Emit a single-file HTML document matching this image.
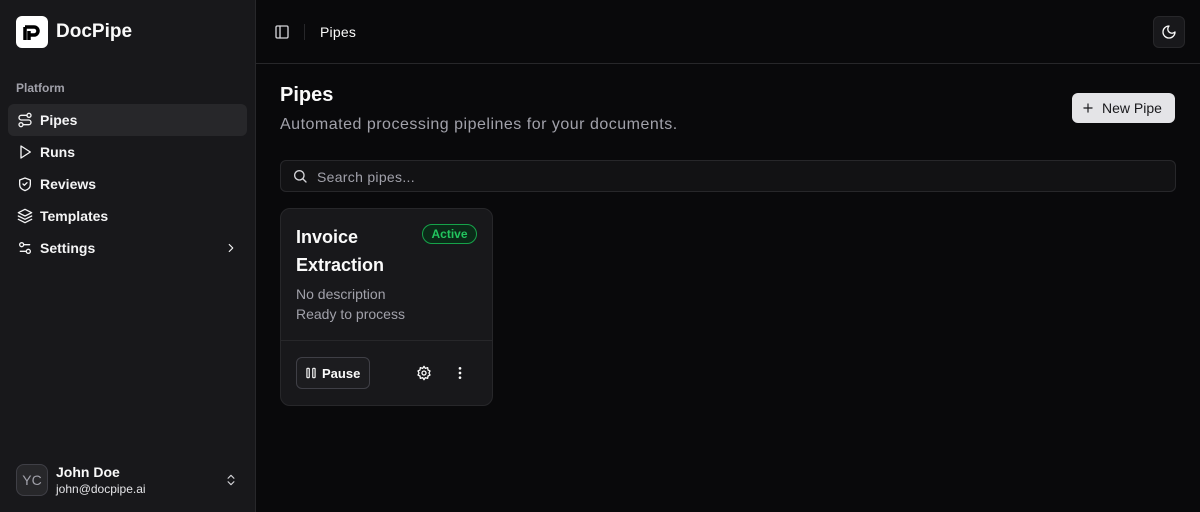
<!DOCTYPE html>
<html><head><meta charset="utf-8"><style>
*{box-sizing:border-box;margin:0;padding:0}
body{width:1200px;height:512px;background:#09090b;font-family:"Liberation Sans",sans-serif;color:#fafafa;position:relative;overflow:hidden}
.sb{position:absolute;left:0;top:0;width:256px;height:512px;background:#18181b;border-right:1px solid #27272a}
.logo{position:absolute;left:16px;top:16px;width:32px;height:32px;background:#fff;border-radius:6px}
.brand{position:absolute;left:56px;top:21px;font-size:19px;font-weight:bold}
.plat{position:absolute;left:16px;top:81px;font-size:12px;color:#a1a1aa;font-weight:bold}
.nav{position:absolute;left:8px;width:239px;height:32px;border-radius:6px;font-size:14px;font-weight:bold;display:flex;align-items:center;padding-left:32px;color:#f4f4f5}
.nav svg{position:absolute;left:9px;top:8px}
.act{background:#27272a}
svg{fill:none;stroke:currentColor;stroke-width:2;stroke-linecap:round;stroke-linejoin:round}
.hdr{position:absolute;left:256px;top:0;right:0;height:64px;border-bottom:1px solid #27272a}
</style></head><body>
<div class="sb">
<div class="logo"><svg width="32" height="32" viewBox="0 0 32 32" style="stroke:#000;stroke-width:3.5;stroke-linecap:butt"><path d="M9 11h9a4 4 0 0 1 0 8h-4M13 15v9M9 11v13"/></svg></div>
<div class="brand">DocPipe</div>
<div class="plat">Platform</div>
<div class="nav act" style="top:104px"><svg width="16" height="16" viewBox="0 0 24 24"><circle cx="6" cy="19" r="3"/><path d="M9 19h8.5a3.5 3.5 0 0 0 0-7h-11a3.5 3.5 0 0 1 0-7H15"/><circle cx="18" cy="5" r="3"/></svg>Pipes</div>
<div class="nav" style="top:136px"><svg width="16" height="16" viewBox="0 0 24 24"><path d="M6 3l14 9-14 9z"/></svg>Runs</div>
<div class="nav" style="top:168px"><svg width="16" height="16" viewBox="0 0 24 24"><path d="M20 13c0 5-3.5 7.5-8 9-4.5-1.5-8-4-8-9V6l8-3 8 3z"/><path d="M9 12l2 2 4-4"/></svg>Reviews</div>
<div class="nav" style="top:200px"><svg width="16" height="16" viewBox="0 0 24 24"><path d="M12 2 2 7l10 5 10-5z"/><path d="M2 12l10 5 10-5M2 17l10 5 10-5"/></svg>Templates</div>
<div class="nav" style="top:232px"><svg width="16" height="16" viewBox="0 0 24 24"><path d="M14 17H5M19 7h-9"/><circle cx="17" cy="17" r="3"/><circle cx="7" cy="7" r="3"/></svg>Settings<svg width="14" height="14" viewBox="0 0 24 24" style="left:216px;top:9px"><path d="M9 18l6-6-6-6"/></svg></div>
<div style="position:absolute;left:16px;top:464px;width:32px;height:32px;border-radius:8px;background:#27272a;border:1px solid #3f3f46;color:#a1a1aa;font-size:14px;display:flex;align-items:center;justify-content:center">YC</div>
<div style="position:absolute;left:56px;top:464px;font-size:14px;font-weight:bold">John Doe</div>
<div style="position:absolute;left:56px;top:482px;font-size:12px;color:#e4e4e7">john@docpipe.ai</div>
<svg width="14" height="14" viewBox="0 0 24 24" style="position:absolute;left:224px;top:473px;color:#d4d4d8"><path d="M7 15l5 5 5-5M7 9l5-5 5 5"/></svg>
</div>
<div class="hdr">
<svg width="16" height="16" viewBox="0 0 24 24" style="position:absolute;left:18px;top:24px;color:#d4d4d8"><rect x="3" y="3" width="18" height="18" rx="2"/><path d="M9 3v18"/></svg>
<div style="position:absolute;left:48px;top:24px;width:1px;height:16px;background:#27272a"></div>
<div style="position:absolute;left:64px;top:24px;font-size:14px;letter-spacing:0.2px">Pipes</div>
<div style="position:absolute;right:15px;top:16px;width:32px;height:32px;border:1px solid #27272a;border-radius:6px;background:#18181b"><svg width="16" height="16" viewBox="0 0 24 24" style="position:absolute;left:7px;top:7px"><path d="M12 3a6 6 0 0 0 9 9 9 9 0 1 1-9-9z"/></svg></div>
</div>
<div style="position:absolute;left:280px;top:84px;font-size:20px;font-weight:bold">Pipes</div>
<div style="position:absolute;left:280px;top:116px;font-size:16px;color:#a1a1aa;letter-spacing:0.5px">Automated processing pipelines for your documents.</div>
<div style="position:absolute;left:1072px;top:93px;width:103px;height:30px;background:#e4e4e7;border-radius:6px;color:#18181b;font-size:14px;display:flex;align-items:center;padding-left:30px">New Pipe<svg width="14" height="14" viewBox="0 0 24 24" style="position:absolute;left:9px;top:8px"><path d="M12 5v14M5 12h14"/></svg></div>
<div style="position:absolute;left:280px;top:160px;width:896px;height:32px;border:1px solid #27272a;border-radius:6px;background:#121214;font-size:14px;color:#a1a1aa;padding:8px 0 0 36px;letter-spacing:0.3px">Search pipes...<svg width="16" height="16" viewBox="0 0 24 24" style="position:absolute;left:11px;top:7px;color:#d4d4d8"><circle cx="11" cy="11" r="7"/><path d="M21 21l-4.3-4.3"/></svg></div>
<div style="position:absolute;left:280px;top:208px;width:213px;height:198px;border:1px solid #27272a;border-radius:10px;background:#18181b">
<div style="position:absolute;left:15px;top:14px;font-size:18px;line-height:28px;font-weight:bold;color:#fafafa">Invoice<br>Extraction</div>
<div style="position:absolute;left:141px;top:15px;height:20px;width:55px;text-align:center;border:1px solid #16a34a;border-radius:10px;color:#22c55e;font-size:12px;line-height:18px;font-weight:bold;background:#0b2a18">Active</div>
<div style="position:absolute;left:15px;top:75px;font-size:14px;color:#a1a1aa;line-height:20px">No description<br>Ready to process</div>
<div style="position:absolute;left:0;right:0;top:131px;height:1px;background:#27272a"></div>
<div style="position:absolute;left:15px;top:148px;width:74px;height:32px;border:1px solid #3f3f46;border-radius:6px;background:#1c1c1f;font-size:13px;font-weight:bold;padding:8px 0 0 25px">Pause<svg width="14" height="14" viewBox="0 0 24 24" style="position:absolute;left:7px;top:8px"><rect x="5" y="4" width="4" height="16" rx="1"/><rect x="15" y="4" width="4" height="16" rx="1"/></svg></div>
<svg width="16" height="16" viewBox="0 0 24 24" style="position:absolute;left:135px;top:156px"><circle cx="12" cy="12" r="3"/><path d="M12 2l2 3 3.5-1 .5 3.5 3 1.5-1.5 3 1.5 3-3 1.5-.5 3.5-3.5-1-2 3-2-3-3.5 1-.5-3.5-3-1.5 1.5-3-1.5-3 3-1.5.5-3.5 3.5 1z"/></svg>
<svg width="16" height="16" viewBox="0 0 24 24" style="position:absolute;left:171px;top:156px"><circle cx="12" cy="5" r="1"/><circle cx="12" cy="12" r="1"/><circle cx="12" cy="19" r="1"/></svg>
</div>
</body></html>
